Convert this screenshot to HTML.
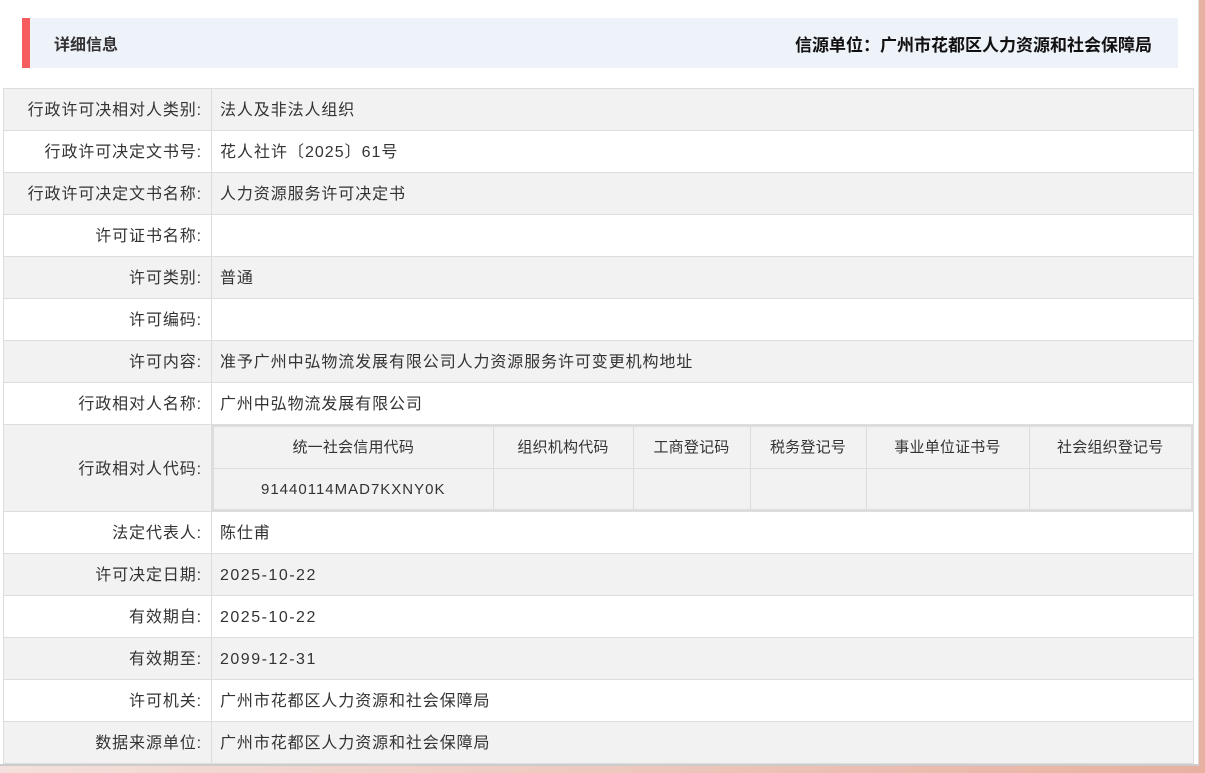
<!DOCTYPE html>
<html><head><meta charset="utf-8"><style>
*{margin:0;padding:0;box-sizing:border-box}
body{width:1205px;height:773px;overflow:hidden;background:linear-gradient(90deg,#f4e0dc,#e8b0a0);font-family:"Liberation Sans","Noto Sans CJK SC",sans-serif;color:#333;position:relative}
.panel{position:absolute;left:0;top:0;width:1199px;height:766px;background:#fff;border-right:1px solid #ddd;border-bottom:2px solid #ccc}
.hdr{position:absolute;left:22px;top:18px;width:1156px;height:50px;background:#eef2f9;border-left:8px solid #f55d5f}
.hdr .l{position:absolute;left:24px;top:13px;font-size:16px;font-weight:bold;color:#333}
.hdr .r{position:absolute;right:26px;top:13px;font-size:17px;font-weight:bold;color:#111}
table.m{position:absolute;left:3px;top:88px;width:1191px;border-collapse:collapse;font-size:16px;letter-spacing:0.9px}
table.m td{border:1px solid #ddd;height:42px;padding:3px 8px 0;vertical-align:middle;line-height:20px}
table.m td.k{width:208px;text-align:right;padding-right:9px}
table.m tr:nth-child(odd){background:#f2f2f2}
table.m tr:nth-child(even){background:#fff}
table.m td.in{padding:0}
table.s{width:100%;border-collapse:collapse;font-size:15px;border:2px solid #ddd;letter-spacing:0.2px}
table.s td{border:1px solid #ddd;height:42px;text-align:center;background:#f2f2f2;padding:2px 0 0}
table.m td.v{letter-spacing:1.5px;padding-top:2px}
.c{letter-spacing:1px}
</style></head><body>
<div class="panel"></div>
<div class="hdr"><span class="l">详细信息</span><span class="r">信源单位：广州市花都区人力资源和社会保障局</span></div>
<table class="m">
<tr><td class="k">行政许可决相对人类别:</td><td>法人及非法人组织</td></tr>
<tr><td class="k">行政许可决定文书号:</td><td class="c">花人社许〔2025〕61号</td></tr>
<tr><td class="k">行政许可决定文书名称:</td><td>人力资源服务许可决定书</td></tr>
<tr><td class="k">许可证书名称:</td><td></td></tr>
<tr><td class="k">许可类别:</td><td>普通</td></tr>
<tr><td class="k">许可编码:</td><td></td></tr>
<tr><td class="k">许可内容:</td><td>准予广州中弘物流发展有限公司人力资源服务许可变更机构地址</td></tr>
<tr><td class="k">行政相对人名称:</td><td>广州中弘物流发展有限公司</td></tr>
<tr style="background:#f2f2f2"><td class="k" style="height:86px">行政相对人代码:</td><td class="in">
<table class="s"><tr><td style="width:280px">统一社会信用代码</td><td style="width:140px">组织机构代码</td><td style="width:117px">工商登记码</td><td style="width:116px">税务登记号</td><td style="width:163px">事业单位证书号</td><td>社会组织登记号</td></tr>
<tr><td class="c">91440114MAD7KXNY0K</td><td></td><td></td><td></td><td></td><td></td></tr></table>
</td></tr>
<tr style="background:#fff"><td class="k">法定代表人:</td><td>陈仕甫</td></tr>
<tr style="background:#f2f2f2"><td class="k">许可决定日期:</td><td class="v">2025-10-22</td></tr>
<tr style="background:#fff"><td class="k">有效期自:</td><td class="v">2025-10-22</td></tr>
<tr style="background:#f2f2f2"><td class="k">有效期至:</td><td class="v">2099-12-31</td></tr>
<tr style="background:#fff"><td class="k">许可机关:</td><td>广州市花都区人力资源和社会保障局</td></tr>
<tr style="background:#f2f2f2"><td class="k">数据来源单位:</td><td>广州市花都区人力资源和社会保障局</td></tr>
</table>
</body></html>
